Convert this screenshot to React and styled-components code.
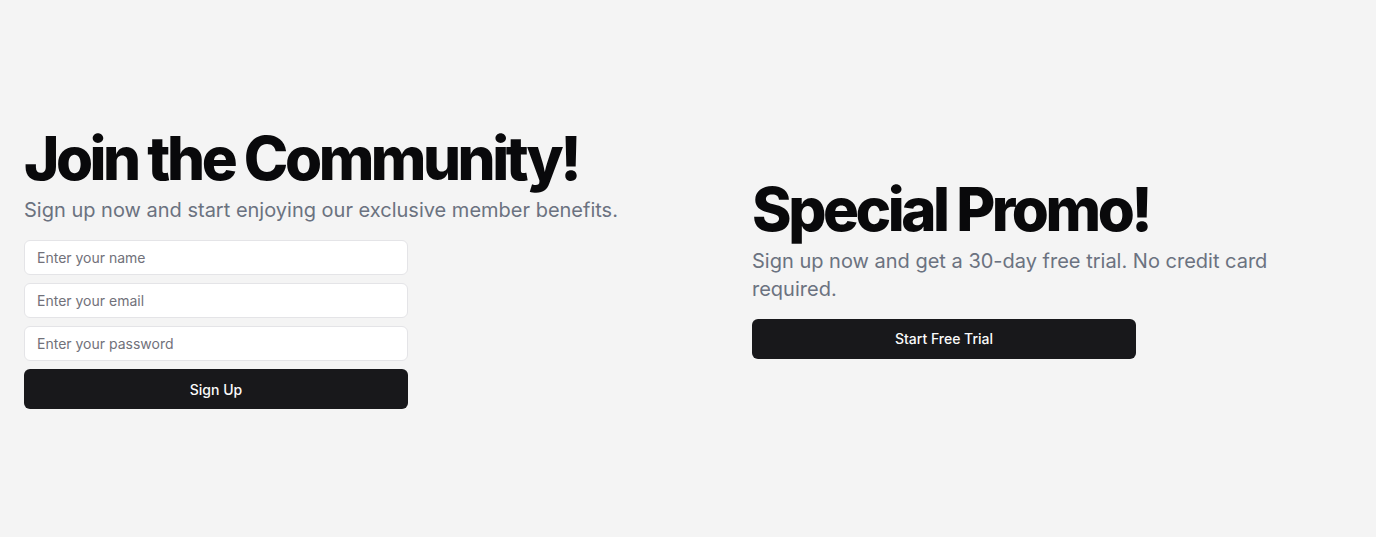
import React from "react";
import styled, { createGlobalStyle } from "styled-components";

const GlobalStyle = createGlobalStyle`
  * { box-sizing: border-box; }
  html, body { margin: 0; padding: 0; }
  body {
    background: #f4f4f4;
    font-family: Inter, "Noto Sans", sans-serif;
    color: #09090b;
  }
`;

const App = () => {
  return (
    <>
      <GlobalStyle />
      <Page>
        <Column>
          <Title>Join the Community!</Title>
          <Lead>Sign up now and start enjoying our exclusive member benefits.</Lead>
          <Form onSubmit={(e) => e.preventDefault()}>
            <Input type="text" placeholder="Enter your name" />
            <Input type="email" placeholder="Enter your email" />
            <Input type="password" placeholder="Enter your password" />
            <Button type="submit">Sign Up</Button>
          </Form>
        </Column>
        <Column>
          <Title>Special Promo!</Title>
          <Lead>Sign up now and get a 30-day free trial. No credit card required.</Lead>
          <Button $spaced>Start Free Trial</Button>
        </Column>
      </Page>
    </>
  );
};

export default App;

const Page = styled.main`
  min-height: 100vh;
  display: grid;
  grid-template-columns: 1fr 1fr;
  column-gap: 128px;
  align-items: center;
  padding: 0 24px;
`;

const Column = styled.section`
  display: flex;
  flex-direction: column;
`;

const Title = styled.h1`
  margin: 0;
  font-size: 60px;
  line-height: 1;
  font-weight: 800;
  letter-spacing: -0.058em;
  color: #09090b;
`;

const Lead = styled.p`
  margin: 8px 0 0;
  font-size: 20px;
  line-height: 28px;
  color: #6b7280;
`;

const Form = styled.form`
  margin-top: 16px;
  width: 384px;
  display: flex;
  flex-direction: column;
  gap: 8px;
`;

const Input = styled.input`
  height: 35px;
  padding: 0 12px;
  border: 1px solid #e4e4e7;
  border-radius: 6px;
  background: #ffffff;
  font-family: inherit;
  font-size: 14px;
  color: #09090b;
  outline: none;

  &::placeholder {
    color: #71717a;
  }
`;

const Button = styled.button`
  height: 40px;
  width: 384px;
  margin-top: ${({ $spaced }) => ($spaced ? "16px" : "0")};
  border: none;
  border-radius: 6px;
  background: #18181b;
  color: #fafafa;
  font-family: inherit;
  font-size: 14px;
  font-weight: 500;
  cursor: pointer;
`;
